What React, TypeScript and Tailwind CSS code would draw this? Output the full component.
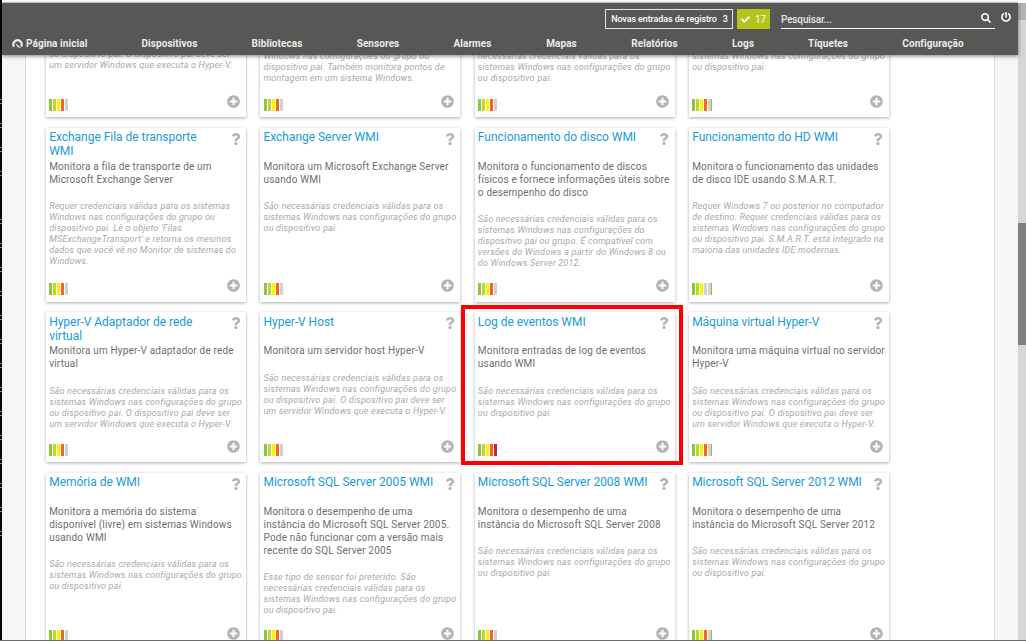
import { FaCheck, FaPlusCircle, FaPowerOff, FaQuestion, FaSearch } from "react-icons/fa";

type Sensor = {
  title?: string;
  description?: string;
  note: string;
  load: number;
};

const CREDENTIALS =
  "São necessárias credenciais válidas para os\nsistemas Windows nas configurações do grupo\nou dispositivo pai.";
const CREDENTIALS_HYPERV =
  CREDENTIALS + " O dispositivo pai deve ser\num servidor Windows que executa o Hyper-V.";

const menuItems = [
  { label: "Dispositivos", width: "w-[119px]" },
  { label: "Bibliotecas", width: "w-[96px]" },
  { label: "Sensores", width: "w-[106px]" },
  { label: "Alarmes", width: "w-[83px]" },
  { label: "Mapas", width: "w-[95px]" },
  { label: "Relatórios", width: "w-[91px]" },
  { label: "Logs", width: "w-[86px]" },
  { label: "Tíquetes", width: "w-[84px]" },
  { label: "Configuração", width: "w-[126px]" },
];

// the first row is scrolled under the header, only its notes remain visible
const scrolledRow: Sensor[] = [
  {
    note: "ou dispositivo pai. O dispositivo pai deve ser\num servidor Windows que executa o Hyper-V.",
    load: 4,
  },
  {
    note: "Windows nas configurações do grupo ou\ndispositivo pai. Também monitora pontos de\nmontagem em um sistema Windows.",
    load: 4,
  },
  {
    note: "necessárias credenciais válidas para os\nsistemas Windows nas configurações do grupo\nou dispositivo pai.",
    load: 4,
  },
  {
    note: "sistemas Windows nas configurações do grupo\nou dispositivo pai.",
    load: 4,
  },
];

const exchangeRow: Sensor[] = [
  {
    title: "Exchange Fila de transporte\nWMI",
    description: "Monitora a fila de transporte de um\nMicrosoft Exchange Server",
    note: "Requer credenciais válidas para os sistemas\nWindows nas configurações do grupo ou\ndispositivo pai. Lê o objeto 'Filas\nMSExchangeTransport' e retorna os mesmos\ndados que você vê no Monitor de sistemas do\nWindows.",
    load: 4,
  },
  {
    title: "Exchange Server WMI",
    description: "Monitora um Microsoft Exchange Server\nusando WMI",
    note: CREDENTIALS,
    load: 4,
  },
  {
    title: "Funcionamento do disco WMI",
    description:
      "Monitora o funcionamento de discos\nfísicos e fornece informações úteis sobre\no desempenho do disco",
    note: "São necessárias credenciais válidas para os\nsistemas Windows nas configurações do\ndispositivo pai ou grupo. É compatível com\nversões do Windows a partir do Windows 8 ou\ndo Windows Server 2012.",
    load: 4,
  },
  {
    title: "Funcionamento do HD WMI",
    description: "Monitora o funcionamento das unidades\nde disco IDE usando S.M.A.R.T.",
    note: "Requer Windows 7 ou posterior no computador\nde destino. Requer credenciais válidas para os\nsistemas Windows nas configurações do grupo\nou dispositivo pai. S.M.A.R.T. está integrado na\nmaioria das unidades IDE modernas.",
    load: 3,
  },
];

const hyperVRow: Sensor[] = [
  {
    title: "Hyper-V Adaptador de rede\nvirtual",
    description: "Monitora um Hyper-V adaptador de rede\nvirtual",
    note: CREDENTIALS_HYPERV,
    load: 4,
  },
  {
    title: "Hyper-V Host",
    description: "Monitora um servidor host Hyper-V",
    note: CREDENTIALS_HYPERV,
    load: 4,
  },
  {
    title: "Log de eventos WMI",
    description: "Monitora entradas de log de eventos\nusando WMI",
    note: CREDENTIALS,
    load: 5,
  },
  {
    title: "Máquina virtual Hyper-V",
    description: "Monitora uma máquina virtual no servidor\nHyper-V",
    note: CREDENTIALS_HYPERV,
    load: 4,
  },
];

const sqlRow: Sensor[] = [
  {
    title: "Memória de WMI",
    description:
      "Monitora a memória do sistema\ndisponível (livre) em sistemas Windows\nusando WMI",
    note: CREDENTIALS,
    load: 4,
  },
  {
    title: "Microsoft SQL Server 2005 WMI",
    description:
      "Monitora o desempenho de uma\ninstância do Microsoft SQL Server 2005.\nPode não funcionar com a versão mais\nrecente do SQL Server 2005",
    note: "Esse tipo de sensor foi preterido. São\nnecessárias credenciais válidas para os\nsistemas Windows nas configurações do grupo\nou dispositivo pai.",
    load: 4,
  },
  {
    title: "Microsoft SQL Server 2008 WMI",
    description: "Monitora o desempenho de uma\ninstância do Microsoft SQL Server 2008",
    note: CREDENTIALS,
    load: 4,
  },
  {
    title: "Microsoft SQL Server 2012 WMI",
    description: "Monitora o desempenho de uma\ninstância do Microsoft SQL Server 2012",
    note: CREDENTIALS,
    load: 4,
  },
];

const loadColors = [
  "bg-[#8cc63f]",
  "bg-[#bdd630]",
  "bg-[#fff200]",
  "bg-[#f26522]",
  "bg-[#d2232a]",
];

function LoadBars({ load, edge }: { load: number; edge: boolean }) {
  return (
    <div className="flex h-3">
      {loadColors.map((color, i) => (
        <span
          key={color}
          className={`mr-px w-[3px] ${i < load ? color : "bg-[#d1d1d1]"}`}
        />
      ))}
      {edge ? <span className="-ml-px w-px bg-[#8cc63f]" /> : null}
    </div>
  );
}

function SensorCard({
  sensor,
  last,
  className,
}: {
  sensor: Sensor;
  last: boolean;
  className: string;
}) {
  return (
    <article
      className={`flex w-[200px] flex-col bg-white pl-[3.2px] shadow-[0_1px_3px_rgba(0,0,0,0.33)] ${className}`}
    >
      {sensor.title ? (
        <div className="flex h-[30px] shrink-0 justify-between pr-[4.5px]">
          <h2 className="whitespace-pre text-[12px] leading-[14px] tracking-[-0.03px] text-[#1a9bd7]">
            {sensor.title}
          </h2>
          <FaQuestion className="mt-[3px] size-3 shrink-0 text-[#b4b4b4]" />
        </div>
      ) : null}
      {sensor.description ? (
        <p className="mb-[15px] whitespace-pre text-[10px] leading-[13px] tracking-[0.18px] text-[#6e6e6e]">
          {sensor.description}
        </p>
      ) : null}
      <p className="whitespace-pre text-[9px] italic leading-[11px] tracking-[0.2px] text-[#a8a8a8]">
        {sensor.note}
      </p>
      <div className="mt-auto flex items-end justify-between pr-[6px]">
        <LoadBars load={sensor.load} edge={last && sensor.load < 5} />
        <FaPlusCircle className="mb-[3px] size-[13px] text-[#b4b4b4]" />
      </div>
    </article>
  );
}

function CardRow({
  sensors,
  className,
  cardClass,
}: {
  sensors: Sensor[];
  className: string;
  cardClass: string;
}) {
  return (
    <div className={`flex w-[843px] shrink-0 justify-between ${className}`}>
      {sensors.map((sensor, i) => (
        <SensorCard
          key={sensor.title ?? i}
          sensor={sensor}
          last={i === 3}
          className={`${cardClass} ${!sensor.title && i > 0 ? "pt-[9px]" : ""}`}
        />
      ))}
    </div>
  );
}

function Header() {
  return (
    <header className="relative z-10 flex h-[52px] shrink-0 flex-col bg-[#575756] text-white shadow-[0_1px_4px_rgba(0,0,0,0.5)]">
      <div className="flex h-[30px] items-start justify-end pr-[7px] pt-[6px]">
        <button className="mr-1 flex h-5 w-[128px] items-center justify-center gap-[6px] whitespace-nowrap border border-[#e5e5e5] pl-px pt-px text-[9px] font-medium tracking-[-0.1px]">
          <span>Novas entradas de registro</span>
          <span>3</span>
        </button>
        <button className="mr-[11px] flex h-5 w-[33px] items-center justify-center gap-[5px] bg-[#b4c41a] text-[10px]">
          <FaCheck className="size-[9px]" />
          <span>17</span>
        </button>
        <label className="flex h-5 w-[214px] items-center justify-between border-b border-white pr-1 pt-[2px] text-[10px] font-medium tracking-[-0.15px] text-[#e6e6e6]">
          Pesquisar...
          <FaSearch className="mb-[3px] size-[10px] text-white" />
        </label>
        <FaPowerOff className="ml-[6px] mt-[3px] size-[10px]" />
      </div>
      <nav className="flex h-[21px] items-center pl-[10px] text-[10px] font-bold tracking-[0.08px] text-[#ebebeb]">
        <a className="flex w-[98px] items-center gap-[3px] whitespace-nowrap">
          <svg viewBox="0 0 12 10" className="h-[9px] w-[11px]" fill="none">
            <path
              d="M2.2 8.6A4.6 4.6 0 1 1 10 8.3"
              stroke="currentColor"
              strokeWidth="2.4"
            />
            <path d="M3.8 4.6 10 9.6 6 9.2Z" fill="currentColor" />
          </svg>
          Página inicial
        </a>
        {menuItems.map((item) => (
          <a key={item.label} className={`shrink-0 text-center ${item.width}`}>
            {item.label}
          </a>
        ))}
      </nav>
    </header>
  );
}

// sliver of the dark window behind, with the ends of its text lines
function BackgroundWindow() {
  return (
    <div className="flex w-[2px] flex-col gap-[19px] bg-[#05050d] pt-[99px]">
      {Array.from({ length: 19 }, (_, i) => (
        <span
          key={i}
          className={`h-[5px] shrink-0 border-y ${
            i === 3 ? "border-[#8a6a3a]" : i === 4 ? "border-transparent" : "border-[#8393ac]"
          }`}
        />
      ))}
    </div>
  );
}

export default function App() {
  return (
    <div className="relative flex h-[641px] w-[1026px] overflow-hidden bg-[#f6f6f6] font-[Roboto,sans-serif]">
      <BackgroundWindow />
      <div className="flex w-[1016px] flex-col">
        <div className="h-[3px] shrink-0 border-b border-[#d8d8d8] bg-white" />
        <Header />
        <main className="mx-6 flex min-h-0 flex-1 flex-col overflow-hidden bg-white pl-5 shadow-[0_0_2px_rgba(0,0,0,0.3)]">
          <CardRow
            sensors={scrolledRow}
            className="-mt-[13px]"
            cardClass="h-[75px] pt-[7px] pb-[6px]"
          />
          <CardRow
            sensors={exchangeRow}
            className="mt-[11px]"
            cardClass="h-[174px] pt-[2px] pb-[7px]"
          />
          <CardRow
            sensors={hyperVRow}
            className="mt-[10px]"
            cardClass="h-[150px] pt-[2px] pb-[6px] [&_h2]:mt-px [&_p:last-of-type]:mt-px"
          />
          <CardRow
            sensors={sqlRow}
            className="mt-[11px]"
            cardClass="h-[176px] pt-[2px] pb-[7px] [&>div:last-child>svg]:mb-[2px]"
          />
        </main>
      </div>
      <div className="flex w-2 flex-col bg-[#d6d6d6]">
        <div className="h-5 border-t-[3px] border-white bg-[#b3b3b3]" />
        <div className="mt-[203px] h-[122px] bg-[#808080]" />
      </div>
      {/* highlight around the event log sensor */}
      <div className="absolute left-[461px] top-[305px] h-[160px] w-[222px] border-4 border-[#ff0000]" />
      <div className="absolute bottom-0 left-0 h-px w-full bg-[#6a6a6a]" />
    </div>
  );
}
